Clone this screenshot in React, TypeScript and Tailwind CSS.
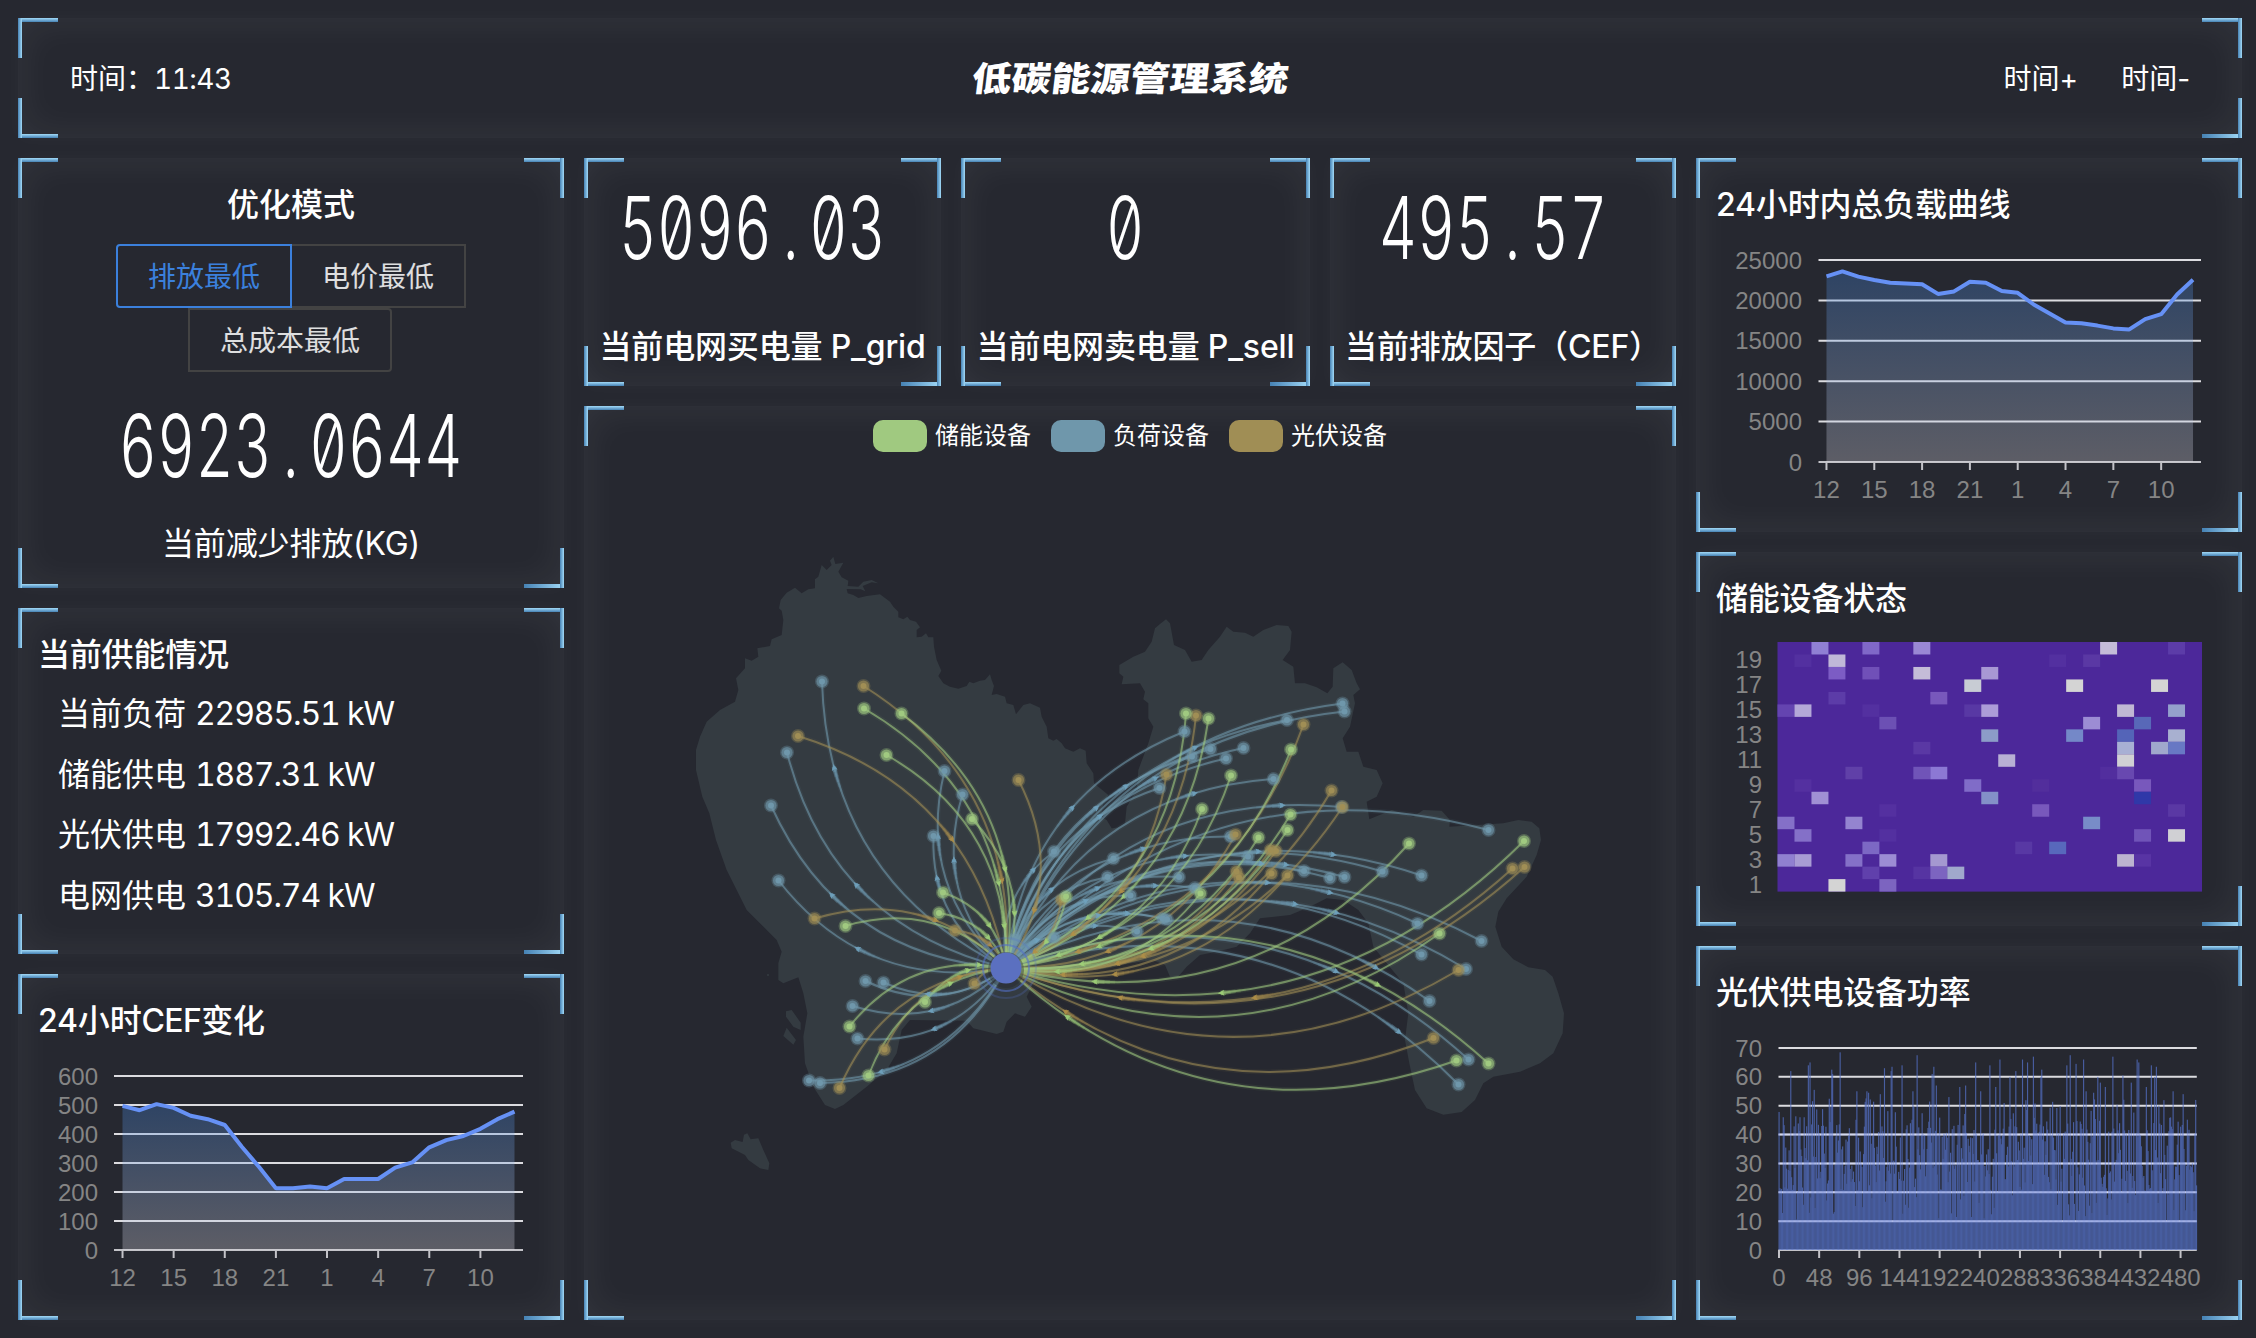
import React from "react";

type Kind = "g" | "b" | "o";
type Pt = [number, number];

const COLORS: Record<Kind, string> = { g: "#a0c980", b: "#6f97ab", o: "#a08e55" };
const TRAIL: Record<Kind, string> = { g: "#9fd078", b: "#70a2be", o: "#b08f48" };

const font = "font-['Inter','Noto_Sans_CJK_SC',sans-serif]";

function Corners() {
  const v = "absolute z-10 h-10 w-1 bg-linear-to-r from-[#4682b4] to-[#a3dbf8]";
  const h = "absolute h-1 w-10 bg-linear-to-b from-[#a3dbf8] to-[#4682b4]";
  return (
    <>
      <i className={`${v} left-0 top-0`} />
      <i className={`${v} right-0 top-0`} />
      <i className={`${v} bottom-0 left-0`} />
      <i className={`${v} bottom-0 right-0`} />
      <i className={`${h} left-0 top-0`} />
      <i className={`${h} right-0 top-0`} />
      <i className={`${h} bottom-0 left-0`} />
      <i className="absolute bottom-0 right-0 h-1 w-10 bg-linear-to-r from-[#4682b4] to-[#a3dbf8]" />
    </>
  );
}

function Panel({ className = "", children }: { className?: string; children: React.ReactNode }) {
  return (
    <section
      className={`relative shadow-[inset_0_0_40px_rgba(255,255,255,0.075),0_0_18px_rgba(255,255,255,0.03)] ${className}`}
    >
      <Corners />
      {children}
    </section>
  );
}

function Title({ children }: { children: React.ReactNode }) {
  return (
    <h2 className="flex h-[92px] shrink-0 items-center pl-[20px] pt-[2px] text-[32px] font-medium leading-none tracking-[-0.006em]">
      {children}
    </h2>
  );
}

function Readout({ children }: { children: string }) {
  const [whole, fraction] = children.split(".");
  return (
    <span className="flex origin-center scale-x-[0.68] whitespace-nowrap text-[87px] font-light leading-[63px] tabular-nums slashed-zero">
      {whole}
      {fraction && (
        <>
          <span className="inline-block w-[55px] text-center">.</span>
          {fraction}
        </>
      )}
    </span>
  );
}

/* ---------- charts ---------- */

const HOURS = ["12", "15", "18", "21", "1", "4", "7", "10"];

interface AreaProps {
  id: string;
  height: number;
  left: number;
  right: number;
  top: number;
  bottom: number;
  labelX: number;
  ticks: string[];
  data: number[];
  max: number;
}

function AreaChart({ id, height, left, right, top, bottom, labelX, ticks, data, max }: AreaProps) {
  const step = (right - left) / data.length;
  const x = (i: number) => left + step * (i + 0.5);
  const y = (v: number) => bottom - (v / max) * (bottom - top);
  const line = data.map((v, i) => `${x(i).toFixed(1)},${y(v).toFixed(1)}`).join(" ");
  const peak = y(Math.max(...data));
  return (
    <svg width={546} height={height} className="block shrink-0 overflow-visible">
      <defs>
        <linearGradient id={id} gradientUnits="userSpaceOnUse" x1={0} x2={0} y1={peak} y2={bottom}>
          <stop offset="0" stopColor="rgb(66,132,220)" />
          <stop offset="1" stopColor="rgb(220,217,227)" />
        </linearGradient>
      </defs>
      {ticks.map((t, i) => {
        const gy = bottom - ((bottom - top) * i) / (ticks.length - 1);
        return (
          <g key={t}>
            <line x1={left} x2={right} y1={gy} y2={gy} stroke={i === 0 ? "#c3c3c8" : "#dcdce0"} strokeWidth={2} />
            <text x={labelX} y={gy + 8.5} textAnchor="end" fill="#858585" fontSize={24}>
              {t}
            </text>
          </g>
        );
      })}
      <polygon
        points={`${x(0)},${bottom} ${line} ${x(data.length - 1)},${bottom}`}
        fill={`url(#${id})`}
        fillOpacity={0.3}
      />
      <polyline points={line} fill="none" stroke="#6691f5" strokeWidth={4} strokeLinejoin="bevel" />
      {HOURS.map((h, i) => (
        <g key={h}>
          <line x1={x(i * 3)} x2={x(i * 3)} y1={bottom} y2={bottom + 8} stroke="#c3c3c8" strokeWidth={2} />
          <text x={x(i * 3)} y={bottom + 36} textAnchor="middle" fill="#858585" fontSize={24}>
            {h}
          </text>
        </g>
      ))}
    </svg>
  );
}

const CEF = [
  497, 482, 503, 490, 463, 451, 431, 356, 287, 213, 213, 219, 213, 245, 245, 245, 284, 302, 354, 379, 393, 418, 451, 477,
];
const LOAD = [
  22985, 23590, 22950, 22520, 22180, 22090, 22010, 20810, 21110, 22310, 22180, 21160, 20940, 19490, 18390, 17260, 17180,
  16880, 16540, 16410, 17690, 18290, 20730, 22560,
];

const HEAT: [number, number, string][] = [
  [2, 0, "#9080d4"], [5, 0, "#8068c8"], [8, 0, "#9a88d4"], [19, 0, "#c4bcd8"], [23, 0, "#5c3ca8"],
  [1, 1, "#5330a0"], [3, 1, "#c0b8d8"], [16, 1, "#5330a0"], [18, 1, "#5a38a4"],
  [3, 2, "#7c5cc4"], [5, 2, "#7050b8"], [8, 2, "#c4bcd8"], [12, 2, "#a898d4"],
  [11, 3, "#c8ccd4"], [17, 3, "#d4d4d4"], [22, 3, "#d4d4d4"],
  [3, 4, "#5c3ca8"], [9, 4, "#7858bc"],
  [0, 5, "#6444b0"], [1, 5, "#b4a8d8"], [5, 5, "#5330a0"], [11, 5, "#5838a4"], [12, 5, "#ac9cd8"], [20, 5, "#c0b8d4"], [23, 5, "#94a0cc"],
  [6, 6, "#6c50b4"], [18, 6, "#9c8cd4"], [21, 6, "#5868b8"],
  [12, 7, "#8c9cc8"], [17, 7, "#7488c8"], [20, 7, "#5464b8"], [23, 7, "#a8b0d0"],
  [8, 8, "#5a38a4"], [20, 8, "#a8b0d4"], [22, 8, "#a0a8cc"], [23, 8, "#6878c4"],
  [13, 9, "#b8b0d4"], [20, 9, "#d0d0d4"],
  [4, 10, "#6040a8"], [8, 10, "#7054b8"], [9, 10, "#8c78d4"], [19, 10, "#522e9e"], [20, 10, "#6848b0"],
  [1, 11, "#5430a0"], [11, 11, "#806cc8"], [15, 11, "#522e9c"], [21, 11, "#7858bc"],
  [2, 12, "#a090d4"], [12, 12, "#8490c8"], [21, 12, "#3038a8"],
  [6, 13, "#5430a0"], [15, 13, "#7858bc"], [23, 13, "#5a38a4"],
  [0, 14, "#8470c8"], [4, 14, "#9484d0"], [18, 14, "#788cc8"],
  [1, 15, "#8470c8"], [6, 15, "#5330a0"], [21, 15, "#7054b8"], [23, 15, "#d0d0d4"],
  [5, 16, "#7c68c4"], [14, 16, "#5838a4"], [16, 16, "#5868bc"],
  [0, 17, "#9080d0"], [1, 17, "#a89cd4"], [4, 17, "#8470c8"], [6, 17, "#9c8cd4"], [9, 17, "#a498d0"], [20, 17, "#bcb4d0"], [21, 17, "#5834a4"],
  [5, 18, "#6040ac"], [8, 18, "#5634a2"], [9, 18, "#7c64c0"], [10, 18, "#a0a8cc"],
  [3, 19, "#d4d4d4"], [6, 19, "#7c64c0"],
];

function Heatmap() {
  const cw = 16.98;
  const ch = 12.48;
  return (
    <svg width={546} height={282} className="block shrink-0 overflow-visible">
      <rect x={81.5} y={-2} width={cw * 25} height={ch * 20} fill="#4c289a" />
      {HEAT.map(([c, r, color]) => (
        <rect key={`${c}-${r}`} x={81.5 + c * cw} y={-2 + r * ch} width={cw} height={ch} fill={color} />
      ))}
      {[1, 3, 5, 7, 9, 11, 13, 15, 17, 19].map((n) => (
        <text key={n} x={66} y={-2 + (20 - n + 0.5) * ch + 7.5} textAnchor="end" fill="#858585" fontSize={24}>
          {n}
        </text>
      ))}
    </svg>
  );
}

/* measured peaks of the photovoltaic units: [unit index, power] */
const PEAKS: Pt[] = [
  [14, 62], [35, 64], [37, 65], [63, 62.5], [64, 61], [73, 68.5], [126, 63], [134, 62], [135, 63.5], [147, 64], [165, 67.5],
  [183, 61], [185, 63.5], [235, 65], [252, 64], [264, 66], [276, 60], [283, 62], [291, 66], [297, 65], [304, 67], [313, 60],
  [314, 62.5], [344, 64], [348, 67.5], [355, 64.5], [364, 66], [399, 67], [411, 60.5], [428, 66], [430, 65], [445, 64],
  [449, 60], [451, 63.5], [42, 55.5], [93, 55], [105, 55], [107, 54.5], [121, 54], [160, 55], [188, 57], [216, 56.5],
  [223, 57], [241, 55], [259, 56.5], [367, 55], [376, 54.5], [381, 60], [384, 58], [390, 56.5], [421, 58], [439, 56.5],
  [471, 55], [483, 54], [498, 52], [5, 46], [25, 46], [30, 46],
];

function makePower() {
  let s = 20231;
  const rnd = () => {
    s = (s * 1103515245 + 12345) % 2147483648;
    return s / 2147483648;
  };
  const out = Array.from({ length: 500 }, () => {
    const a = rnd();
    return a < 0.15 ? 9.5 + rnd() * 12 : a < 0.78 ? 20 + rnd() * 24 : 38 + rnd() * 15;
  });
  PEAKS.forEach(([i, v]) => {
    out[i] = v;
  });
  return out;
}
const POWER = makePower();

function PowerChart() {
  const left = 82.5;
  const right = 500.8;
  const bottom = 212;
  const top = 10;
  const step = (right - left) / 500;
  const gy = (n: number) => bottom - ((bottom - top) * n) / 7;
  return (
    <svg width={546} height={282} className="block shrink-0 overflow-visible">
      {[0, 1, 2, 3, 4, 5, 6, 7].map((n) => (
        <g key={n}>
          <line x1={left} x2={right} y1={gy(n)} y2={gy(n)} stroke={n ? "#dcdce0" : "#c3c3c8"} strokeWidth={2} />
          <text x={66} y={gy(n) + 8.5} textAnchor="end" fill="#858585" fontSize={24}>
            {n * 10}
          </text>
        </g>
      ))}
      <g opacity={0.75} fill="#5470c6">
        {POWER.map((v, i) => {
          const h = (v / 70) * (bottom - top);
          return <rect key={i} x={left + i * step} y={bottom - h} width={1.15} height={h} />;
        })}
      </g>
      {[1, 2, 3, 4].map((n) => (
        <line key={n} x1={left} x2={right} y1={gy(n)} y2={gy(n)} stroke="#c8d0ff" strokeOpacity={0.45} strokeWidth={2} />
      ))}
      {[0, 48, 96, 144, 192, 240, 288, 336, 384, 432, 480].map((n) => (
        <g key={n}>
          <line x1={left + n * step + 0.5} x2={left + n * step + 0.5} y1={bottom} y2={bottom + 8} stroke="#c3c3c8" strokeWidth={2} />
          <text x={left + n * step + 0.5} y={bottom + 36} textAnchor="middle" fill="#858585" fontSize={24}>
            {n}
          </text>
        </g>
      ))}
    </svg>
  );
}

/* ---------- map ---------- */

const LAND =
  "M460,50 466,72 490,68 475,95 485,112 505,122 503,138 535,140 550,125 575,120 595,130 575,127 548,138 556,154 542,148 500,147 503,160 520,165 535,174 560,168 600,163 630,185 640,200 655,215 655,232 670,238 682,230 690,240 708,245 720,262 710,270 710,292 725,290 738,280 745,292 760,292 762,320 770,360 784,392 775,408 790,430 810,440 835,446 860,438 868,425 880,430 900,422 915,420 930,403 935,420 942,438 935,465 950,462 975,470 980,490 1000,495 1008,523 1030,495 1050,490 1080,503 1085,530 1100,560 1105,595 1120,602 1130,597 1145,610 1155,625 1180,635 1200,625 1217,632 1220,670 1240,700 1242,730 1285,765 1270,790 1262,830 1280,840 1295,865 1320,862 1335,850 1340,800 1370,750 1375,690 1405,610 1420,560 1405,535 1405,490 1390,478 1395,455 1380,430 1325,433 1330,410 1318,400 1318,375 1360,350 1395,335 1415,305 1425,265 1440,252 1458,238 1470,250 1482,315 1515,330 1535,365 1565,360 1585,330 1620,290 1640,260 1660,275 1695,278 1720,290 1750,270 1790,255 1825,258 1835,275 1830,330 1808,360 1840,380 1845,430 1875,430 1910,442 1942,460 1958,440 1960,385 1988,367 2015,390 2030,430 2040,448 2020,465 2025,490 2010,560 1988,595 2000,635 2035,635 2050,680 2090,690 2108,730 2090,770 2060,785 2068,838 2135,810 2200,830 2230,810 2285,812 2310,840 2308,860 2390,855 2470,850 2515,840 2555,845 2578,865 2583,900 2570,945 2540,1010 2480,1075 2455,1115 2446,1160 2465,1220 2500,1258 2545,1282 2595,1290 2618,1310 2635,1360 2652,1420 2648,1480 2620,1540 2580,1570 2520,1595 2440,1610 2410,1630 2385,1680 2345,1716 2290,1724 2240,1705 2205,1650 2188,1570 2175,1500 2185,1420 2170,1330 2120,1270 2080,1220 2065,1150 2035,1110 1990,1080 1940,1075 1890,1100 1830,1125 1740,1135 1710,1180 1670,1220 1610,1235 1560,1245 1520,1280 1492,1313 1470,1310 1455,1275 1420,1260 1350,1270 1250,1290 1120,1290 1060,1330 1040,1370 1055,1400 1035,1430 1005,1420 980,1445 970,1475 950,1482 880,1465 860,1442 690,1440 665,1470 650,1540 620,1590 560,1640 490,1695 465,1707 435,1695 400,1640 375,1570 370,1490 382,1420 370,1360 355,1312 310,1330 295,1320 295,1270 305,1235 290,1200 200,1110 140,990 108,900 88,820 67,770 48,690 48,630 60,590 80,545 120,510 165,485 175,450 168,415 195,385 195,355 215,362 235,350 232,325 270,318 275,298 305,285 310,240 305,212 297,205 302,180 320,158 345,143 365,160 385,148 405,145 405,118 415,110 425,75 440,90 455,75 450,62Z M318,1414 335,1410 362,1448 362,1470 340,1460 318,1430Z M320,1463 348,1500 340,1514 310,1488Z M165,1800 188,1806 192,1784 202,1780 212,1798 235,1795 250,1830 268,1870 265,1890 240,1885 205,1860 195,1845 155,1825 152,1808Z";

const HUB: Pt = [1006, 968];

const DEVICES: Record<Kind, Pt[]> = {
  b: [
    [822, 681.5], [787, 752.5], [771, 805.5], [944.5, 771], [962.5, 794.5], [933.5, 836], [778.5, 880.5], [865.5, 981],
    [883.5, 982.5], [852.5, 1006], [857.5, 1038.5], [809, 1080.5], [820, 1083], [1054, 851.5], [1113.5, 858.5],
    [1107.5, 877], [1015, 939], [1054, 937.5], [1342.5, 703.5], [1344.5, 711.5], [1287, 720], [1184.5, 731.5],
    [1210.5, 749], [1243.5, 748], [1192, 756.5], [1226, 758.5], [1159.5, 788], [1273.5, 779], [1341.5, 807],
    [1230.5, 836.5], [1248, 856.5], [1304, 871], [1330, 878], [1344.5, 877], [1382.5, 871.5], [1179, 877], [1195, 888],
    [1130.5, 895.5], [1162.5, 918.5], [1167, 919.5], [1137, 931.5], [1488.5, 830], [1421.5, 875.5], [1417.5, 923.5],
    [1481.5, 941], [1421.5, 954.5], [1466, 969], [1429.5, 1001], [1468.5, 1059.5], [1458.5, 1084.5],
  ],
  g: [
    [864, 708.5], [901.5, 713.5], [886.5, 755], [972, 819], [943, 892.5], [939, 913], [845.5, 926], [849.5, 1026.5],
    [925, 1002], [868.5, 1075.5], [1066, 896.5], [1186, 713.5], [1208.5, 718.5], [1291, 749.5], [1231, 775.5],
    [1202, 809], [1290.5, 814.5], [1287.5, 830], [1258.5, 837.5], [1200.5, 893.5], [1409, 843.5], [1524, 841],
    [1439.5, 933.5], [1456.5, 1060.5], [1488.5, 1063.5],
  ],
  o: [
    [863.5, 686], [798, 736], [1018.5, 780], [814.5, 918.5], [955, 930.5], [974.5, 983.5], [884.5, 1049.5],
    [839.5, 1088], [1061.5, 900], [1196, 715.5], [1303.5, 724.5], [1166.5, 774.5], [1331.5, 790.5], [1342.5, 807],
    [1235.5, 834.5], [1270.5, 850], [1276, 851], [1236.5, 871.5], [1239, 877.5], [1271.5, 873.5], [1287.5, 875.5],
    [1512.5, 868.5], [1524.5, 867], [1458.5, 970], [1433.5, 1038],
  ],
};

/* current positions of the pulses travelling along the flows */
const PULSES: Record<Kind, Pt[]> = {
  b: [
    [834, 767], [939, 835], [954, 859], [830.5, 893.5], [856, 883.5], [936.5, 877.5], [856, 947.5], [927.5, 994],
    [930, 1011.5], [932.5, 1029.5], [880.5, 1072.5], [1034, 869.5], [1052.5, 888.5], [1086.5, 900.5], [1099, 887],
    [1098.5, 914.5], [1096.5, 926], [1038, 940], [1072.5, 807], [1097, 806], [1101.5, 815], [1128, 786.5],
    [1156.5, 778], [1195, 746.5], [1196, 792.5], [1145, 848.5], [1186, 856], [1156.5, 885.5], [1259, 852.5],
    [1263, 864.5], [1286, 864.5], [1336, 855], [1268, 882.5], [1295, 905], [1333, 893.5], [1337, 913], [1281, 805.5],
    [1128, 913.5], [1376, 967], [1335, 970.5], [1402, 1033],
  ],
  g: [
    [1005.5, 870], [999.5, 883], [1015, 914], [1004.5, 927], [990, 926], [989, 938], [980.5, 965], [969, 969.5],
    [951.5, 983], [1045.5, 943], [1086.5, 919], [1099, 937], [1096.5, 947], [1056.5, 956], [1081, 964],
    [1057.5, 971.5], [1096, 982], [1068, 1018], [1123, 897], [1150, 949], [1220.5, 993], [1380.5, 986],
  ],
  o: [
    [951.5, 839], [1002.5, 880.5], [1034, 911], [936, 920], [990.5, 945], [960, 976.5], [1034, 952], [1071.5, 935.5],
    [1076.5, 951.5], [1107.5, 951], [1061.5, 974], [1113, 975], [1066.5, 1012.5], [1121.5, 892], [1141.5, 956],
    [1116.5, 963], [1120.5, 997], [1253, 998.5],
  ],
};

type Curve = [Pt, Pt, Pt];

/* loads are fed from the hub, the other devices deliver to it (the last storage unit is charging) */
function curveOf(kind: Kind, p: Pt): Curve {
  const outgoing = kind === "b" || p[0] === 1488.5;
  const [a, z] = outgoing ? [HUB, p] : [p, HUB];
  const k = 0.3;
  return [a, [(a[0] + z[0]) / 2 - (a[1] - z[1]) * k, (a[1] + z[1]) / 2 - (z[0] - a[0]) * k], z];
}
function at([a, c, z]: Curve, t: number): Pt {
  const u = 1 - t;
  return [u * u * a[0] + 2 * u * t * c[0] + t * t * z[0], u * u * a[1] + 2 * u * t * c[1] + t * t * z[1]];
}

const KINDS: Kind[] = ["b", "o", "g"];
const CURVES = Object.fromEntries(KINDS.map((k) => [k, DEVICES[k].map((p) => curveOf(k, p))])) as Record<Kind, Curve[]>;

function Pulse({ kind, pos }: { kind: Kind; pos: Pt }) {
  let best = Infinity;
  let curve = CURVES[kind][0];
  let t = 0;
  for (const c of CURVES[kind]) {
    for (let s = 0.04; s < 0.98; s += 0.01) {
      const [x, y] = at(c, s);
      const d = (x - pos[0]) ** 2 + (y - pos[1]) ** 2;
      if (d < best) {
        best = d;
        curve = c;
        t = s;
      }
    }
  }
  const head = at(curve, t);
  const ahead = at(curve, t + 0.01);
  const angle = (Math.atan2(ahead[1] - head[1], ahead[0] - head[0]) * 180) / Math.PI;
  const len = Math.hypot(curve[2][0] - curve[0][0], curve[2][1] - curve[0][1]);
  const tail = [0, 1, 2, 3, 4, 5].map((i) => at(curve, Math.max(0, t - (i * 5) / len)));
  return (
    <g>
      {tail.slice(1).map((p, i) => (
        <line
          key={i}
          x1={tail[i][0]}
          y1={tail[i][1]}
          x2={p[0]}
          y2={p[1]}
          stroke={TRAIL[kind]}
          strokeWidth={4.4 - i * 0.4}
          strokeOpacity={0.55 - i * 0.11}
        />
      ))}
      <path
        d="M3,0 L-3.5,-3 L-2.5,0 L-3.5,3Z"
        fill={TRAIL[kind]}
        fillOpacity={0.85}
        transform={`translate(${head[0]} ${head[1]}) rotate(${angle})`}
      />
    </g>
  );
}

function FlowMap() {
  return (
    <svg width={1092} height={860} viewBox="584 460 1092 860" className="block">
      <path d={LAND} fill="#343b41" transform="translate(680 540) scale(0.33333)" />
      <circle cx={768} cy={975} r={1} fill="#343b41" />
      {KINDS.map((k) => (
        <g key={k} fill="none" stroke={COLORS[k]}>
          {CURVES[k].map(([a, c, z], i) => (
            <g key={i}>
              <path d={`M${a} Q${c} ${z}`} strokeOpacity={0.07} strokeWidth={5} />
              <path d={`M${a} Q${c} ${z}`} strokeOpacity={0.6} strokeWidth={2} />
            </g>
          ))}
        </g>
      ))}
      {KINDS.map((k) => (
        <g key={k}>
          {PULSES[k].map((p, i) => (
            <Pulse key={i} kind={k} pos={p} />
          ))}
        </g>
      ))}
      {KINDS.map((k) => (
        <g key={k} fill={COLORS[k]}>
          {DEVICES[k].map(([x, y], i) => (
            <g key={i}>
              <circle cx={x} cy={y} r={7} fillOpacity={0.3} />
              <circle cx={x} cy={y} r={5.6} fillOpacity={0.6} />
              <circle cx={x} cy={y} r={3} />
            </g>
          ))}
        </g>
      ))}
      <circle cx={HUB[0]} cy={HUB[1]} r={30} fill="none" stroke="#5470c6" strokeOpacity={0.25} strokeWidth={2} />
      <circle cx={HUB[0]} cy={HUB[1]} r={23} fill="none" stroke="#5470c6" strokeOpacity={0.6} strokeWidth={2} />
      <circle cx={HUB[0]} cy={HUB[1] + 2} r={18} fill="#262830" fillOpacity={0.4} />
      <circle cx={HUB[0]} cy={HUB[1]} r={15.5} fill="#5b70c0" />
    </svg>
  );
}

function LegendItem({ swatch, label }: { swatch: string; label: string }) {
  return (
    <div className="flex items-center gap-2">
      <span className={`h-8 w-[54px] rounded-[10px] ${swatch}`} />
      <span className="text-2xl leading-none">{label}</span>
    </div>
  );
}

function Kpi({ value, label }: { value: string; label: string }) {
  return (
    <Panel className="flex flex-col items-center pt-[38px]">
      <div className="pr-5">
        <Readout>{value}</Readout>
      </div>
      <p className="mt-[72px] whitespace-nowrap text-[32px] font-medium leading-8 tracking-[-0.005em]">{label}</p>
    </Panel>
  );
}

const SUPPLY = [
  ["当前负荷", "22985.51 kW"],
  ["储能供电", "1887.31 kW"],
  ["光伏供电", "17992.46 kW"],
  ["电网供电", "3105.74 kW"],
];

export default function App() {
  return (
    <div
      className={`flex h-[1338px] w-[2256px] flex-col gap-5 overflow-hidden bg-[#262830] py-[18px] pl-[18px] pr-[14px] text-white ${font} [&_svg]:font-['Liberation_Sans',sans-serif]`}
    >
      <Panel className="flex h-[120px] shrink-0 items-center justify-between px-[52px] pt-[2px] text-[28px]">
        <div className="flex-1 tabular-nums">
          时间：<span className="tracking-[-0.5px]">11:43</span>
        </div>
        <h1 className="-skew-x-6 scale-y-[0.86] pt-[2px] text-[39.6px] font-black leading-none">低碳能源管理系统</h1>
        <div className="flex flex-1 justify-end gap-[43px]">
          <button>时间+</button>
          <button>时间-</button>
        </div>
      </Panel>

      <main className="grid flex-1 grid-cols-[546px_1092px_546px] gap-5">
        <div className="flex flex-col gap-5">
          <Panel className="flex h-[430px] flex-col items-center pt-[31px]">
            <h2 className="text-[32px] font-medium leading-8">优化模式</h2>
            <div className="mt-[23px] flex w-[400px] flex-wrap justify-center text-[28px] text-white/85">
              <button className="h-16 w-[176px] rounded-l border-2 border-[#3b80dc] pt-[2px] text-[#3b80dc]">排放最低</button>
              <button className="h-16 w-[174px] border-2 border-l-0 border-[#434343] pt-[2px]">电价最低</button>
              <button className="mr-[2px] h-16 w-[204px] rounded-r border-2 border-[#434343] pt-[2px]">总成本最低</button>
            </div>
            <div className="mt-[42px]">
              <Readout>6923.0644</Readout>
            </div>
            <p className="mt-[51px] text-[32px] leading-8 tracking-[-0.005em]">当前减少排放(KG)</p>
          </Panel>
          <Panel className="flex h-[346px] flex-col">
            <Title>当前供能情况</Title>
            <ul className="-mt-[16px] flex flex-col pl-[40px] text-[32px] leading-[60.6px]">
              {SUPPLY.map(([name, power]) => (
                <li key={name}>
                  {name} <span className="tabular-nums tracking-[-1.15px]">{power}</span>
                </li>
              ))}
            </ul>
          </Panel>
          <Panel className="flex h-[346px] flex-col">
            <Title>
              24小时<span className="tracking-[-0.02em]">CEF</span>变化
            </Title>
            <AreaChart
              id="cef"
              height={254}
              left={96}
              right={505}
              top={10}
              bottom={184}
              labelX={80}
              ticks={["0", "100", "200", "300", "400", "500", "600"]}
              data={CEF}
              max={600}
            />
          </Panel>
        </div>

        <div className="flex flex-col gap-5">
          <div className="grid h-[228px] grid-cols-[357px_349px_346px] gap-5">
            <Kpi value="5096.03" label="当前电网买电量 P_grid" />
            <Kpi value="0" label="当前电网卖电量 P_sell" />
            <Kpi value="495.57" label="当前排放因子（CEF）" />
          </div>
          <Panel className="flex h-[914px] flex-col">
            <div className="flex h-[54px] items-end justify-center gap-5 pb-2">
              <LegendItem swatch="bg-[#a0c980]" label="储能设备" />
              <LegendItem swatch="bg-[#6f97ab]" label="负荷设备" />
              <LegendItem swatch="bg-[#a08e55]" label="光伏设备" />
            </div>
            <FlowMap />
          </Panel>
        </div>

        <div className="flex flex-col gap-5">
          <Panel className="flex h-[374px] flex-col">
            <Title>24小时内总负载曲线</Title>
            <AreaChart
              id="load"
              height={282}
              left={122.5}
              right={505}
              top={10}
              bottom={212}
              labelX={106}
              ticks={["0", "5000", "10000", "15000", "20000", "25000"]}
              data={LOAD}
              max={25000}
            />
          </Panel>
          <Panel className="flex h-[374px] flex-col">
            <Title>储能设备状态</Title>
            <Heatmap />
          </Panel>
          <Panel className="flex h-[374px] flex-col">
            <Title>光伏供电设备功率</Title>
            <PowerChart />
          </Panel>
        </div>
      </main>
    </div>
  );
}
